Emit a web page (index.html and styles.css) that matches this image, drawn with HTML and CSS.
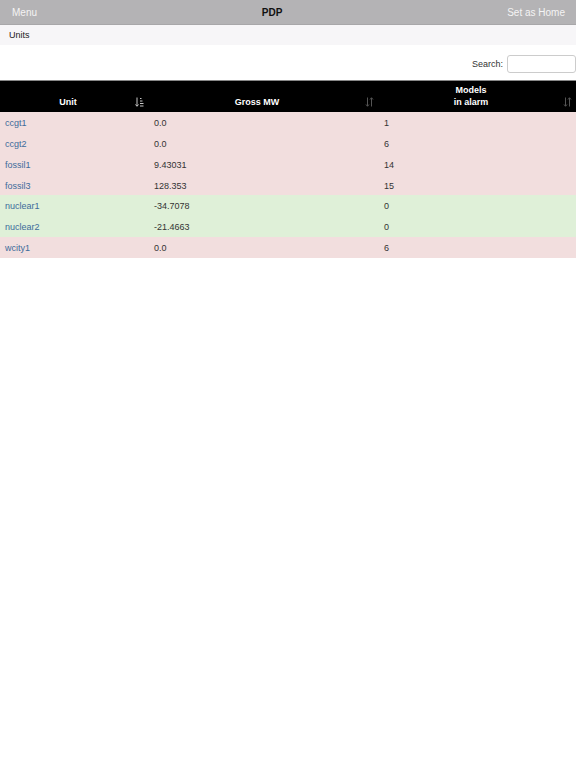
FILE: index.html
```html
<!DOCTYPE html>
<html lang="en">
<head>
  <meta charset="UTF-8">
  <title>PDP</title>
  <link rel="stylesheet" href="styles.css">
</head>
<body>

  <div class="topbar">
    <span class="nav-btn">Menu</span>
    <span class="title">PDP</span>
    <span class="nav-btn">Set as Home</span>
  </div>

  <div class="subbar">Units</div>

  <div class="search-row">
    <label for="search">Search:</label>
    <input type="text" id="search" class="search">
  </div>

  <table class="units">
    <colgroup>
      <col class="w1">
      <col class="w2">
      <col class="w3">
    </colgroup>
    <thead>
      <tr>
        <th>Unit
          <svg class="sort on" width="9" height="10" viewBox="0 0 9 10">
            <path d="M2 0.5V9M0.5 7.5L2 9.3L3.5 7.5" stroke="currentColor" fill="none" stroke-width="1"/>
            <path d="M5 1.5H6.5M5 4H7.5M5 6.5H8.5M5 9H8.5" stroke="currentColor" stroke-width="1"/>
          </svg>
        </th>
        <th>Gross MW
          <svg class="sort" width="9" height="10" viewBox="0 0 9 10">
            <path d="M2.5 0.5V9M1 7.5L2.5 9.3L4 7.5M6.5 9.5V1M5 2.5L6.5 0.7L8 2.5" stroke="currentColor" fill="none" stroke-width="1"/>
          </svg>
        </th>
        <th>Models<br>in alarm
          <svg class="sort" width="9" height="10" viewBox="0 0 9 10">
            <path d="M2.5 0.5V9M1 7.5L2.5 9.3L4 7.5M6.5 9.5V1M5 2.5L6.5 0.7L8 2.5" stroke="currentColor" fill="none" stroke-width="1"/>
          </svg>
        </th>
      </tr>
    </thead>
    <tbody>
      <tr class="bad"><td><a href="#">ccgt1</a></td><td>0.0</td><td>1</td></tr>
      <tr class="bad"><td><a href="#">ccgt2</a></td><td>0.0</td><td>6</td></tr>
      <tr class="bad"><td><a href="#">fossil1</a></td><td>9.43031</td><td>14</td></tr>
      <tr class="bad"><td><a href="#">fossil3</a></td><td>128.353</td><td>15</td></tr>
      <tr class="good"><td><a href="#">nuclear1</a></td><td>-34.7078</td><td>0</td></tr>
      <tr class="good"><td><a href="#">nuclear2</a></td><td>-21.4663</td><td>0</td></tr>
      <tr class="bad"><td><a href="#">wcity1</a></td><td>0.0</td><td>6</td></tr>
    </tbody>
  </table>

</body>
</html>
```

FILE: styles.css
```css
body {
  margin: 0;
  font-family: "Liberation Sans", Arial, sans-serif;
  font-size: 9px;
  color: #333;
  background: #fff;
}
.topbar {
  height: 25px;
  background-color: #b4b3b5;
  display: flex;
  align-items: center;
  justify-content: space-between;
  padding: 0 11px 0 12px;
  border-bottom: 1px solid #a8a7a9;
  box-sizing: border-box;
}
.nav-btn {
  color: #f4f4f4;
  font-size: 10px;
}
.title {
  font-weight: bold;
  font-size: 10px;
  color: #111;
}
.subbar {
  height: 20px;
  line-height: 20px;
  background-color: #f7f6f8;
  padding-left: 9px;
  color: #222;
}
.search-row {
  display: flex;
  justify-content: flex-end;
  align-items: center;
  gap: 4px;
  height: 35px;
  padding-top: 3px;
  box-sizing: border-box;
  color: #333;
}
.search {
  width: 69px;
  height: 18px;
  box-sizing: border-box;
  border: 1px solid #ccc;
  border-radius: 3px;
  padding: 0;
}
.units {
  width: 100%;
  border-collapse: collapse;
  table-layout: fixed;
  border-top: 1px solid #888;
}
.w1 { width: 148px; }
.w2 { width: 230px; }
.units th {
  background-color: #000;
  color: #fff;
  font-weight: bold;
  height: 27px;
  padding: 0 12px 4px 0;
  text-align: center;
  vertical-align: bottom;
  position: relative;
  line-height: 12px;
}
.sort {
  position: absolute;
  right: 4px;
  bottom: 5px;
  color: #555;
}
.sort.on { color: #c8c8c8; }
.units td {
  height: 19.86px;
  padding: 1px 6px 0;
  color: #333;
}
.units td:first-child { padding-left: 5px; }
.units td a {
  color: #3d6b9b;
  text-decoration: none;
}
tr.bad td { background-color: #f2dede; }
tr.good td { background-color: #dff0d8; }
```
